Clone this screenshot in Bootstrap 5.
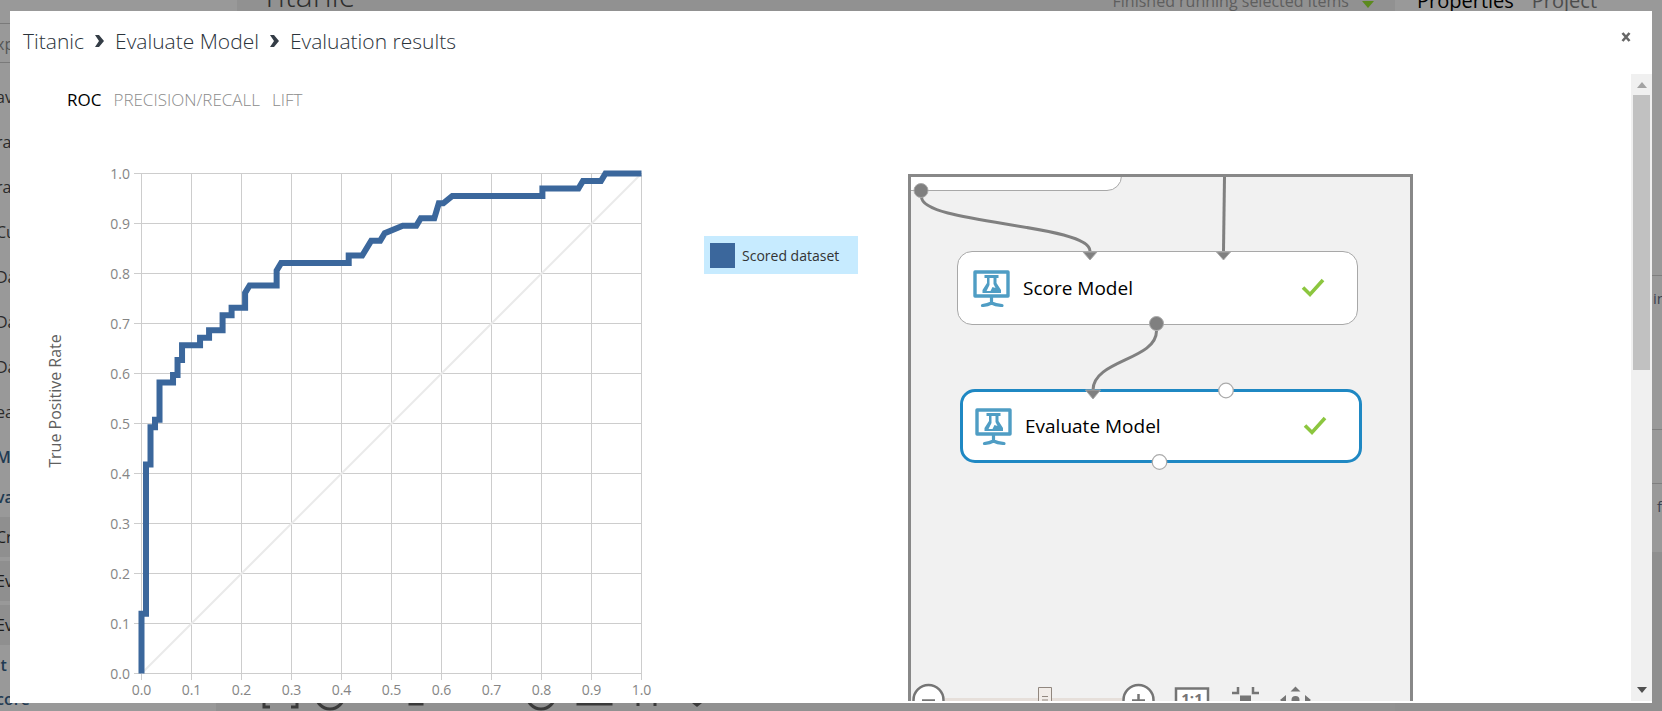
<!DOCTYPE html>
<html lang="en">
<head>
<meta charset="utf-8">
<meta name="viewport" content="width=device-width, initial-scale=1">
<title>Evaluation results</title>
<link href="https://cdn.jsdelivr.net/npm/bootstrap@5.3.0/dist/css/bootstrap.min.css" rel="stylesheet">
<style>
body{font-family:"Open Sans","Noto Sans",sans-serif;height:100vh;overflow:hidden;background:#999;color:#2b2b2b}
/* dimmed studio behind the dialog */
.studio{height:100vh;overflow:hidden}
.side-left{width:216px;font-size:16px;line-height:20px;text-indent:-4px}
.side-left .item{height:45px;padding-top:10px;white-space:nowrap}
.side-left .head{height:40px;padding-top:10px;font-weight:600;color:#1f3a52}
.side-left .leaf{height:40px;margin-bottom:4px;padding-top:10px;background:#8f8f8f;color:#1c1c1c}
.side-left .tail{height:34px;padding-top:6px}
.side-left .search{height:40px;margin-top:23px;margin-bottom:14px;padding-top:10px;border-top:1px solid #7a7a7a;border-bottom:1px solid #7a7a7a;color:#555}
.stage{background:#919191;min-width:0}
.side-gap{width:21px;height:11px;background:#999}
.stage-title{font-size:32px;line-height:36px;font-weight:300;color:#2d2d2d;margin-top:-23px;padding-left:24px}
.stage-status{font-size:16px;line-height:20px;color:#5e5e5e;margin-top:-9px;padding-right:20px}
.stage-top{height:16px}
.side-right{width:267px;font-size:20px;line-height:24px}
.side-right .tabs-bg{height:275px;padding-left:22px;gap:18px}
.side-right .tabs-bg span{margin-top:-11px}
.side-right .cut{border-top:1px solid #7f7f7f;font-size:15px;color:#3c4250;padding:10px 0 0 258px}
/* dialog */
.dialog{position:fixed;inset:11px 10px 8px 10px;background:#fff;z-index:10;padding-bottom:2px}
.dialog-head{height:63px;padding:16px 21px 0 13px}
.crumbs{font-size:21px;line-height:28px;font-weight:300;gap:11px}
.crumbs a{color:#2b333b;text-decoration:none}
.close-x{border:0;background:none;padding:0;width:10px;height:20px;line-height:0}
.scroll-zone{min-height:0}
.content-zone{overflow:hidden;min-width:0;padding-left:30px}
.view-tabs{padding:12px 0 0 27px;gap:12px;font-size:17px;line-height:28px;height:90px}
.view-tabs button{border:0;background:none;padding:0;height:28px;color:#8c8c8c;font-weight:300}
.view-tabs button.on{color:#000;font-weight:400}
.chart text{font-size:14px;fill:#858585}
.chart .axis-name{font-size:16px;fill:#5f5f5f}
.key-box{margin:72px 50px 0 44px;width:154px;height:38px;padding-left:6px;gap:7px;background:#c7ebff;font-size:14px;color:#333}
.key-box span{width:25px;height:25px;background:#3b679c}
.flow{position:relative;margin-top:10px;width:505px;height:640px;border:3px solid #888;background:#f1f1f1;overflow:hidden}
.flow svg.wires{position:absolute;inset:0;z-index:2}
.node{position:absolute;width:401px;height:74px;border:1px solid #a8a8a8;border-radius:15px;background:#fff;font-size:19px;color:#000;padding:0 32px 0 15px}
.node.picked{width:402px;border:3px solid #1f88c3;padding:0 32px 0 12px}
.n-prev{left:-190px;top:-60px}
.n-score{left:46px;top:74px}
.n-eval{left:49px;top:212px}
.node .label-t{margin-left:13px}
.track{width:21px;background:#f0f0f0;padding:8px 2px 8px}
.thumb{height:275px;background:#c1c1c1;margin-top:7px}
</style>
</head>
<body>
<div class="studio d-flex" aria-hidden="true">
  <div class="side-left flex-shrink-0 overflow-hidden">
    <div class="search">xp</div>
    <div class="item">av</div><div class="item">ra</div><div class="item">ra</div><div class="item">Cu</div>
    <div class="item">Da</div><div class="item">Da</div><div class="item">Da</div><div class="item">ea</div>
    <div class="head">Ma</div><div class="head">va</div>
    <div class="leaf">Cr</div><div class="leaf">Ev</div><div class="leaf">Ev</div>
    <div class="head tail">it</div><div class="head tail">core</div>
  </div>
  <div class="stage flex-grow-1 d-flex flex-column justify-content-between">
    <div class="stage-top d-flex align-items-start">
      <div class="side-gap"></div>
      <div class="stage-title me-auto">Titanic</div>
      <div class="stage-status">Finished running selected items <svg class="ms-2" width="14" height="14" viewBox="0 0 14 14"><path d="M1 5l6 7 6-7" fill="#5c8a1e"/></svg></div>
    </div>
    <svg width="520" height="8" viewBox="216 703 520 8" fill="none" stroke="#3a3a3a" stroke-width="3"><path d="M264 700v7h6M297 700v7h-6M410 700v4h12v-4M578 700v4h33v-4M638 700v6M655 700v6"/><circle cx="330" cy="695" r="14"/><circle cx="541" cy="695" r="14"/><path d="M692 703h10l-5 4z" fill="#3a3a3a" stroke="none"/></svg>
  </div>
  <div class="side-right flex-shrink-0">
    <div class="tabs-bg d-flex align-items-start"><span class="text-black">Properties</span><span style="color:#4c4c4c">Project</span></div>
    <div class="d-flex flex-column">
      <div class="cut" style="height:154px">in</div>
      <div class="cut" style="height:54px"></div>
      <div class="cut" style="height:69px">&nbsp;f</div>
      <div style="height:160px;background:#8f8f8f"></div>
    </div>
  </div>
</div>

<main class="dialog d-flex flex-column" role="dialog" aria-label="Evaluation results">
  <header class="dialog-head d-flex justify-content-between align-items-start flex-shrink-0">
    <nav class="crumbs d-flex align-items-center" aria-label="Path">
      <a href="#">Titanic</a>
      <svg width="9" height="12" viewBox="0 0 9 12"><path d="M0 0h4l5 6-5 6H0l4-6z" fill="#343d46"/></svg>
      <a href="#">Evaluate Model</a>
      <svg width="9" height="12" viewBox="0 0 9 12"><path d="M0 0h4l5 6-5 6H0l4-6z" fill="#343d46"/></svg>
      <a href="#">Evaluation results</a>
    </nav>
    <button class="close-x" type="button" aria-label="Close"><svg width="10" height="10" viewBox="0 0 10 10"><path d="M1.500 1l7 8M8.500 1l-7 8" stroke="#666" stroke-width="2.600"/></svg></button>
  </header>
  <div class="scroll-zone d-flex flex-grow-1">
    <div class="content-zone flex-grow-1">
      <div class="view-tabs d-flex align-items-start">
        <button class="on" type="button">ROC</button><button type="button">PRECISION/RECALL</button><button type="button">LIFT</button>
      </div>
      <div class="d-flex align-items-start">
        <svg class="chart flex-shrink-0" id="roc" width="620" height="534" viewBox="40 164 620 534" role="img" aria-label="ROC curve">
          <g id="grid" stroke="#cdcdcd" stroke-width="1" shape-rendering="crispEdges"></g>
          <path d="M141.500 673.500l500-500" stroke="#eaeaea" stroke-width="2"/>
          <polyline id="curve" fill="none" stroke="#3b679c" stroke-width="6"/>
          <g id="ticks"></g>
          <text class="axis-name" transform="translate(61 401) rotate(-90)" text-anchor="middle">True Positive Rate</text>
        </svg>
        <div class="key-box d-flex align-items-center flex-shrink-0"><span></span>Scored dataset</div>
        <div class="flow flex-shrink-0">
          <div class="node n-prev"></div>
          <div class="node n-score d-flex align-items-center">
            <svg width="37" height="37" viewBox="0 0 37 37"><use href="#lab"/></svg><span class="label-t me-auto">Score Model</span>
            <svg width="24" height="20" viewBox="0 0 24 20"><path d="M2 9.500l7 7L22 2" fill="none" stroke="#8cc63f" stroke-width="3.600"/></svg>
          </div>
          <div class="node picked n-eval d-flex align-items-center">
            <svg width="37" height="37" viewBox="0 0 37 37"><use href="#lab"/></svg><span class="label-t me-auto">Evaluate Model</span>
            <svg width="24" height="20" viewBox="0 0 24 20"><path d="M2 9.500l7 7L22 2" fill="none" stroke="#8cc63f" stroke-width="3.600"/></svg>
          </div>
          <svg class="wires" width="499" height="634" viewBox="911 177 499 634">
            <defs>
              <g id="lab"><path d="M2 2h33v24H2z" fill="none" stroke="#4f9dc4" stroke-width="3.400" stroke-linejoin="round"/><path d="M18.500 27v6M9.500 35.500q5-.5 9-2.500q4 2 10.500 2.500" fill="none" stroke="#4f9dc4" stroke-width="3.200" stroke-linecap="round"/><path d="M11.500 5h14v3h-2v5l4.500 7v3H9.500v-3L14 13V8h-2.500z" fill="#4f9dc4"/><path d="M16.500 8h4v6l2 4-3-1-2 4h-4l3-6z" fill="#fff"/></g>
            </defs>
            <g fill="none" stroke="#808080" stroke-width="3">
              <path d="M921.500 197C921.500 224 1090 224 1090 251"/><path d="M1224.500 177L1223.500 251"/><path d="M1156.500 331C1156.500 360 1093 360 1093 390"/>
            </g>
            <g fill="#808080" stroke="#a9a9a9"><path d="M1083 252h14l-7 8zM1216.500 252h14l-7 8zM1085.500 390h15l-7.500 9z"/><circle cx="921" cy="190.500" r="7"/><circle cx="1156.500" cy="323.500" r="7"/></g>
            <g fill="#fff" stroke="#aaa" stroke-width="1.200"><circle cx="1226" cy="390.500" r="7.300"/><circle cx="1159.500" cy="462" r="7.300"/></g>
            <path d="M945 699.500h177" stroke="#e6dfda" stroke-width="3"/>
            <path d="M1038.500 687.500h13v22h-13zM1042 696.500h6M1042 700h6" fill="#f1ece8" stroke="#91877f"/>
            <g fill="#fff" stroke="#757575" stroke-width="2.500"><circle cx="928.500" cy="700" r="15"/><circle cx="1138.500" cy="700" r="15"/><path d="M1176 688.500h32v26h-32z"/><path d="M922 700.500h13M1132 700.500h13M1138.500 694v13"/></g>
            <text x="1192" y="704" text-anchor="middle" font-size="15" font-weight="700" fill="#757575">1:1</text>
            <path d="M1238 687v6h-6M1253 687v6h6" fill="none" stroke="#757575" stroke-width="2.500"/>
            <path d="M1240 695.500h11v10h-11zM1290.500 691.500h10l-5-5zM1286 695v10l-6-5zM1305 695v10l6-5z" fill="#757575"/><circle cx="1295.500" cy="700" r="4" fill="#757575"/>
          </svg>
        </div>
      </div>
    </div>
    <div class="track d-flex flex-column flex-shrink-0" aria-hidden="true">
      <svg class="mx-auto flex-shrink-0" width="10" height="6" viewBox="0 0 10 6"><path d="M0 6l5-6 5 6z" fill="#a3a3a3"/></svg>
      <div class="thumb mb-auto"></div>
      <svg class="mx-auto flex-shrink-0" width="10" height="6" viewBox="0 0 10 6"><path d="M0 0l5 6 5-6z" fill="#505050"/></svg>
    </div>
  </div>
</main>
<script src="https://cdn.jsdelivr.net/npm/bootstrap@5.3.0/dist/js/bootstrap.bundle.min.js"></script>
<script>
// [false positives of 111, true positives of 67]
const roc=[[0,0],[0,8],[1,8],[1,28],[2,28],[2,33],[3,33],[3,34],[4,34],[4,39],[7,39],[7,40],[8,40],[8,42],[9,42],[9,44],[13,44],[13,45],[15,45],[15,46],[18,46],[18,48],[20,48],[20,49],[23,49],[23,51],[24,52],[30,52],[30,54],[31,55],[46,55],[46,56],[49,56],[51,58],[53,58],[54,59],[58,60],[61,60],[62,61],[65,61],[66,63],[67,63],[69,64],[89,64],[89,65],[97,65],[98,66],[102,66],[103,67],[111,67]];
const X=f=>141.5+500*f,Y=f=>673.5-500*f;
document.getElementById('curve').setAttribute('points',roc.map(([a,b])=>X(a/111)+','+Y(b/67)).join(' '));
let g='',t='';
for(let i=0;i<=10;i++){
  const x=X(i/10),y=Y(i/10),s=(i/10).toFixed(1);
  g+=`<path d="M${x} 173V680M134 ${y}H642"/>`;
  t+=`<text x="130" y="${y+5}" text-anchor="end">${s}</text><text x="${x}" y="695" text-anchor="middle">${s}</text>`;
}
document.getElementById('grid').innerHTML=g;
document.getElementById('ticks').innerHTML=t;
</script>
</body>
</html>
